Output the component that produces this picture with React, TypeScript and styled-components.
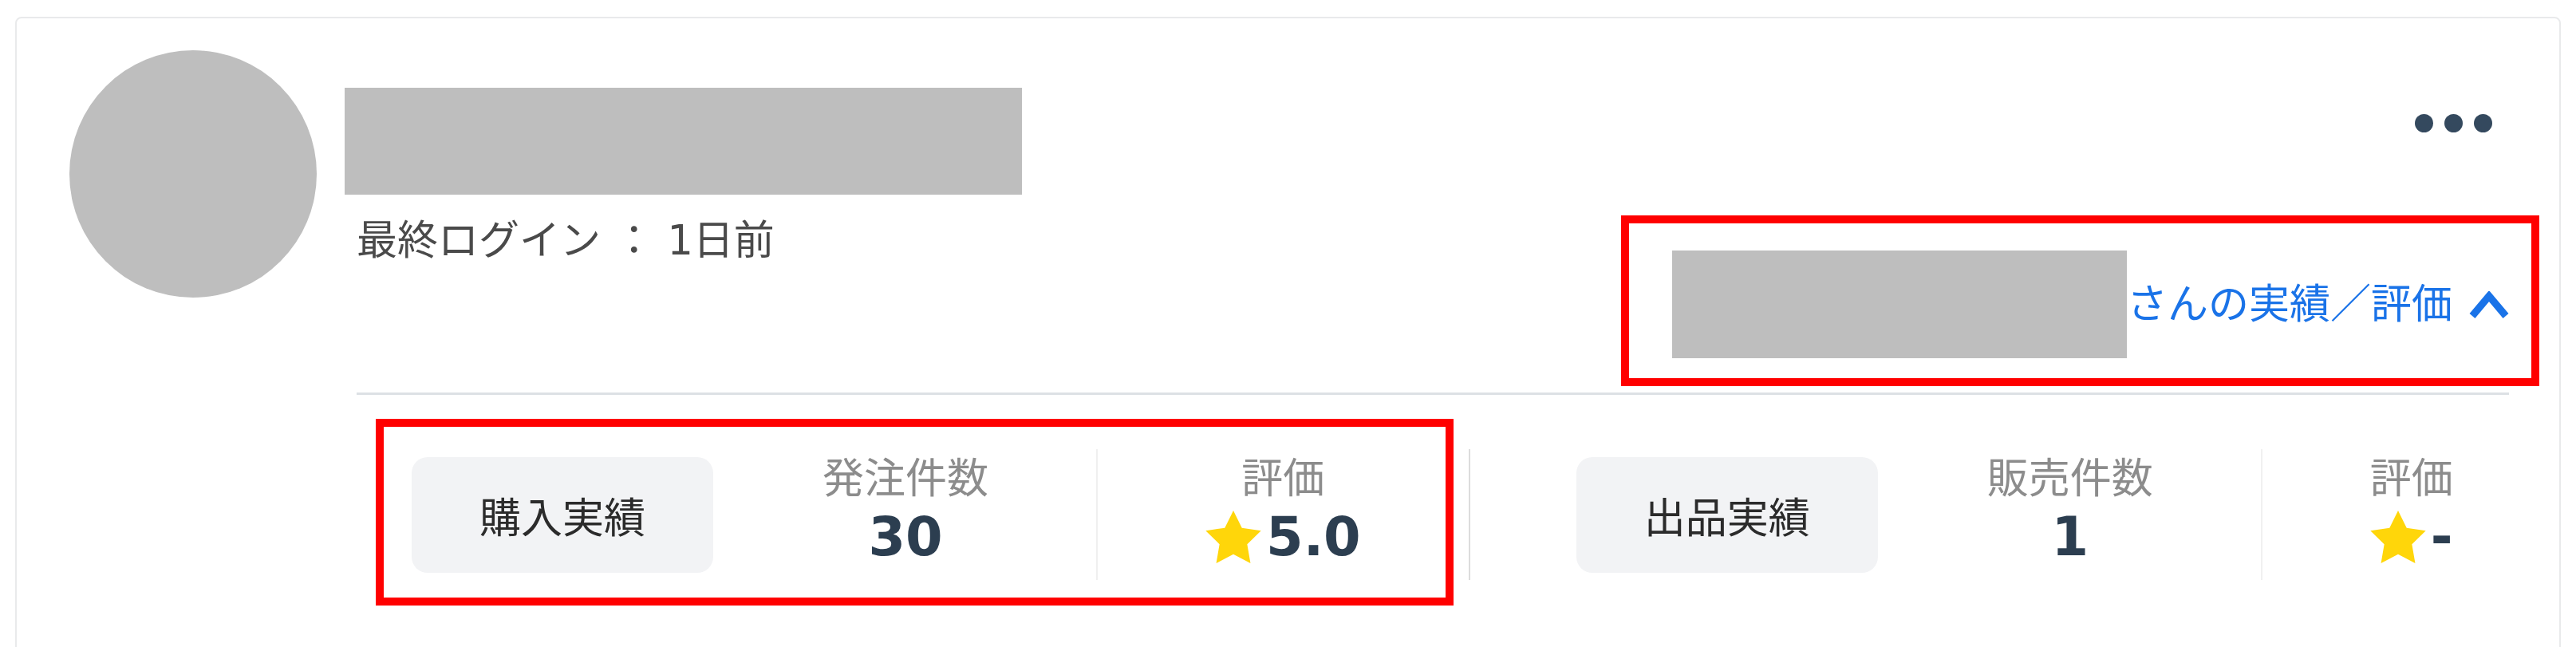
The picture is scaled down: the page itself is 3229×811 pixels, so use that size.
import styled, { createGlobalStyle } from 'styled-components';

const GlobalStyle = createGlobalStyle`
  html, body {
    margin: 0;
    padding: 0;
    background: #ffffff;
  }
  body {
    font-family: "DejaVu Sans", "Noto Sans CJK JP", sans-serif;
  }
  *, *::before, *::after {
    box-sizing: border-box;
  }
`;

type MarkerBox = { top: number; right: number; bottom: number; left: number };

const stats = {
	buy: { title: '購入実績', countLabel: '発注件数', count: '30', rating: '5.0' },
	sell: { title: '出品実績', countLabel: '販売件数', count: '1', rating: '-' },
};

function Star() {
	return (
		<StarIcon viewBox="2 2 20 19.02" aria-hidden="true">
			<polygon points="12,2 15.09,8.26 22,9.27 17,14.14 18.18,21.02 12,17.77 5.82,21.02 7,14.14 2,9.27 8.91,8.26" />
		</StarIcon>
	);
}

function StatGroup({
	data,
	marker,
}: {
	data: typeof stats.buy;
	marker?: MarkerBox;
}) {
	return (
		<Group>
			<Pill>{data.title}</Pill>
			<Stat>
				<StatLabel>{data.countLabel}</StatLabel>
				<StatValue>{data.count}</StatValue>
			</Stat>
			<Stat $divided>
				<StatLabel>評価</StatLabel>
				<StatValue>
					<Star />
					{data.rating}
				</StatValue>
			</Stat>
			{marker && <Marker $box={marker} />}
		</Group>
	);
}

export default function App() {
	return (
		<>
			<GlobalStyle />
			<Page>
				<Card>
					<Avatar />
					<Info>
						<Header>
							<LeftCol>
								<NameBox $w={849} $h={134} />
								<LoginText>最終ログイン ： 1日前</LoginText>
							</LeftCol>
							<RightCol>
								<MoreButton aria-label="more">
									<svg width="97" height="23" viewBox="0 0 97 23">
										<circle cx="11.5" cy="11.5" r="11.5" />
										<circle cx="48.5" cy="11.5" r="11.5" />
										<circle cx="85.5" cy="11.5" r="11.5" />
									</svg>
								</MoreButton>
								<LinkRow>
									<NameBox $w={570} $h={135} />
									<LinkText>さんの実績／評価</LinkText>
									<Chevron viewBox="0 0 50 34" aria-hidden="true">
										<path d="M4 31 L25 6 L46 31" />
									</Chevron>
									<Marker $box={{ top: -44, right: -38, bottom: -35, left: -64 }} />
								</LinkRow>
							</RightCol>
						</Header>
						<Divider />
						<StatsRow>
							<StatGroup
								data={stats.buy}
								marker={{ top: -38, right: 19, bottom: -32, left: -45 }}
							/>
							<GroupDivider />
							<StatGroup data={stats.sell} />
						</StatsRow>
					</Info>
				</Card>
			</Page>
		</>
	);
}

const Page = styled.div`
	padding: 21px 19px 0;
`;

const Card = styled.section`
	display: flex;
	align-items: flex-start;
	gap: 50px;
	border: 2px solid #e9eaeb;
	border-radius: 8px;
	padding: 40px 63px 120px 66px;
`;

const Avatar = styled.div`
	width: 310px;
	height: 310px;
	border-radius: 50%;
	background: #bebebe;
	flex-shrink: 0;
`;

const Info = styled.div`
	flex: 1;
	min-width: 0;
	display: flex;
	flex-direction: column;
`;

const Header = styled.div`
	display: flex;
	justify-content: space-between;
	align-items: flex-start;
`;

const LeftCol = styled.div`
	display: flex;
	flex-direction: column;
`;

const NameBox = styled.div<{ $w: number; $h: number }>`
	width: ${(p) => p.$w}px;
	height: ${(p) => p.$h}px;
	background: #bebebe;
	flex-shrink: 0;

	${LeftCol} > & {
		margin: 47px 0 0 -15px;
	}
`;

const LoginText = styled.div`
	margin-top: 20px;
	font-size: 51px;
	line-height: 1.5;
	color: #4a4a4a;
	white-space: pre;
`;

const RightCol = styled.div`
	display: flex;
	flex-direction: column;
	align-items: flex-end;
`;

const MoreButton = styled.button`
	display: flex;
	background: none;
	border: none;
	padding: 0;
	margin: 80px 21px 0 0;
	cursor: pointer;

	svg {
		fill: #34495e;
	}
`;

const LinkRow = styled.div`
	position: relative;
	display: flex;
	align-items: center;
	margin-top: 148px;
`;

const LinkText = styled.span`
	font-size: 51px;
	line-height: 1;
	color: #1a73e8;
	white-space: nowrap;
`;

const Chevron = styled.svg`
	width: 50px;
	height: 34px;
	margin-left: 21px;
	fill: none;
	stroke: #1a73e8;
	stroke-width: 9;
	stroke-linejoin: miter;
`;

const Marker = styled.span<{ $box: MarkerBox }>`
	position: absolute;
	top: ${(p) => p.$box.top}px;
	right: ${(p) => p.$box.right}px;
	bottom: ${(p) => p.$box.bottom}px;
	left: ${(p) => p.$box.left}px;
	border: 10px solid #ff0000;
	pointer-events: none;
`;

const Divider = styled.hr`
	height: 3px;
	margin: 43px 0 0;
	border: none;
	background: #dde1e5;
`;

const StatsRow = styled.div`
	display: flex;
	align-items: center;
	margin-top: 68px;
	padding-left: 69px;
`;

const Group = styled.div`
	position: relative;
	display: flex;
	align-items: center;
	flex-shrink: 0;
`;

const Pill = styled.div`
	display: flex;
	align-items: center;
	justify-content: center;
	width: 378px;
	height: 145px;
	border-radius: 20px;
	background: #f2f3f5;
	font-size: 52px;
	color: #2b2b2b;
	flex-shrink: 0;
`;

const Stat = styled.div<{ $divided?: boolean }>`
	display: flex;
	flex-direction: column;
	align-items: center;
	height: 164px;
	padding: 6px 135px 0;
	border-left: 2px solid ${(p) => (p.$divided ? '#f0f0f0' : 'transparent')};
	flex-shrink: 0;
`;

const StatLabel = styled.div`
	font-size: 52px;
	line-height: 62px;
	color: #8c8c8c;
	white-space: nowrap;
`;

const StatValue = styled.div`
	display: flex;
	align-items: center;
	gap: 6px;
	margin-top: 4px;
	font-size: 67px;
	font-weight: bold;
	line-height: 76px;
	color: #2c3e50;
	white-space: nowrap;
`;

const StarIcon = styled.svg`
	width: 70px;
	height: 66px;
	fill: #ffd60a;
`;

const GroupDivider = styled.div`
	width: 2px;
	height: 164px;
	margin-right: 133px;
	background: #dcdcdc;
	flex-shrink: 0;
`;
